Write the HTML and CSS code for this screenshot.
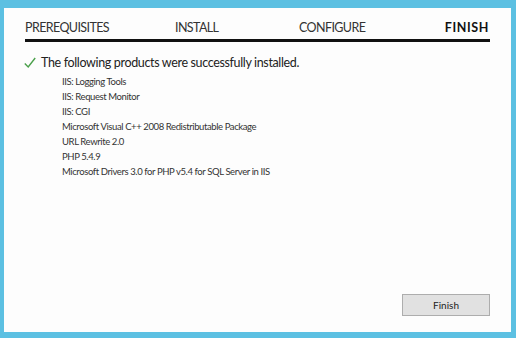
FILE: index.html
```html
<!DOCTYPE html>
<html lang="en">
<head>
    <meta charset="UTF-8">
    <title>Setup - Finish</title>
    <link rel="stylesheet" href="styles.css">
</head>
<body>
    <div class="wwindow">
        <div class="ppanel">
            <div class="ttabs">
                <span class="ttab">PREREQUISITES</span>
                <span class="ttab">INSTALL</span>
                <span class="ttab">CONFIGURE</span>
                <span class="ttab ttab-active">FINISH</span>
            </div>
            <div class="rresult">
                <svg class="ccheck" width="12" height="12" viewBox="0 0 12 12">
                    <path d="M0.8 6.4 L4.2 10 L11.2 1" fill="none" stroke="#4aa04a" stroke-width="1.4"/>
                </svg>
                <span>The following products were successfully installed.</span>
            </div>
            <ul class="pproducts">
                <li>IIS: Logging Tools</li>
                <li>IIS: Request Monitor</li>
                <li>IIS: CGI</li>
                <li>Microsoft Visual C++ 2008 Redistributable Package</li>
                <li>URL Rewrite 2.0</li>
                <li>PHP 5.4.9</li>
                <li>Microsoft Drivers 3.0 for PHP v5.4 for SQL Server in IIS</li>
            </ul>
            <div class="ffooter">
                <button class="bbutton">Finish</button>
            </div>
        </div>
    </div>
</body>
</html>
```

FILE: styles.css
```css
html, body {
    margin: 0;
    height: 100%;
}
body {
    background-color: #5cc0e2;
    font-family: Lato, "Open Sans", sans-serif;
    color: #222;
}
.wwindow {
    height: 100%;
    box-sizing: border-box;
    padding: 8px 5px 6px 4px;
}
.ppanel {
    height: 100%;
    box-sizing: border-box;
    background-color: #fdfdfd;
    padding: 12px 21px 16px 21px;
    display: flex;
    flex-direction: column;
}
.ttabs {
    display: grid;
    grid-template-columns: 150px 124px 144px 1fr;
    border-bottom: 3px solid #111;
    padding-bottom: 3px;
    font-size: 12.5px;
    letter-spacing: -0.6px;
    line-height: 16px;
    color: #333;
}
.ttab-active {
    text-align: right;
    font-weight: bold;
    letter-spacing: 0.6px;
    color: #111;
    padding-right: 1px;
}
.rresult {
    display: flex;
    align-items: center;
    gap: 5px;
    margin-top: 12px;
    margin-left: -1px;
    font-size: 12.5px;
    letter-spacing: -0.35px;
    line-height: 18px;
    color: #222;
}
.pproducts {
    list-style: none;
    margin: 2px 0 0 0;
    padding: 0 0 0 37px;
    font-size: 9.5px;
    letter-spacing: -0.4px;
    line-height: 15px;
    color: #333;
}
.ffooter {
    margin-top: auto;
    display: flex;
    justify-content: flex-end;
}
.bbutton {
    width: 88px;
    height: 22px;
    background-color: #e1e1e1;
    border: 1px solid #adadad;
    font-family: Lato, "Open Sans", sans-serif;
    font-size: 10px;
    color: #222;
    padding: 0;
}
```
